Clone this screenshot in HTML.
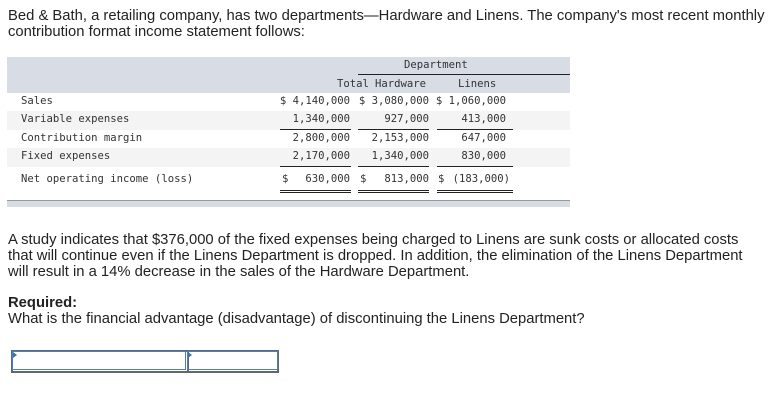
<!DOCTYPE html>
<html><head><style>
body{margin:0;width:768px;height:407px;background:#fff;position:relative;font-family:"Liberation Sans",Arial,sans-serif;color:#222;overflow:hidden}
.p{position:absolute;left:8px;font-size:14.8px;line-height:16px;white-space:nowrap}
.m{position:absolute;font-family:"DejaVu Sans Mono","Liberation Mono",monospace;font-size:10.6px;color:#333;white-space:nowrap}
.r{text-align:right}
.band{position:absolute;left:7px;width:563px}
.ln{position:absolute;height:1px;background:#222}
</style></head><body>
<div class="p" style="top:8px">Bed &amp; Bath, a retailing company, has two departments—Hardware and Linens. The company's most recent monthly<br>contribution format income statement follows:</div>

<div class="band" style="top:57px;height:36px;background:#d8dce4"></div>
<div class="band" style="top:111px;height:19px;background:#f4f4f4"></div>
<div class="band" style="top:148px;height:19px;background:#f4f4f4"></div>
<div class="band" style="top:200px;height:6px;background:#d8dce4;border-top:1px solid #999"></div>

<div class="m" style="left:404px;top:59px">Department</div>
<div class="ln" style="left:358px;width:212px;top:74px"></div>
<div class="m" style="left:337px;top:78px">Total</div>
<div class="m" style="left:375px;top:78px">Hardware</div>
<div class="m" style="left:458px;top:78px">Linens</div>

<div class="m" style="left:21px;top:95px">Sales</div>
<div class="m" style="left:21px;top:113px">Variable expenses</div>
<div class="m" style="left:21px;top:132px">Contribution margin</div>
<div class="m" style="left:21px;top:150px">Fixed expenses</div>
<div class="m" style="left:21px;top:173px">Net operating income (loss)</div>

<div class="m r" style="right:418px;top:95px">$ 4,140,000</div>
<div class="m r" style="right:339px;top:95px">$ 3,080,000</div>
<div class="m r" style="right:262px;top:95px">$ 1,060,000</div>
<div class="m r" style="right:418px;top:113px">1,340,000</div>
<div class="m r" style="right:339px;top:113px">927,000</div>
<div class="m r" style="right:262px;top:113px">413,000</div>
<div class="m r" style="right:418px;top:132px">2,800,000</div>
<div class="m r" style="right:339px;top:132px">2,153,000</div>
<div class="m r" style="right:262px;top:132px">647,000</div>
<div class="m r" style="right:418px;top:150px">2,170,000</div>
<div class="m r" style="right:339px;top:150px">1,340,000</div>
<div class="m r" style="right:262px;top:150px">830,000</div>
<div class="m" style="left:282px;top:173px">$</div>
<div class="m r" style="right:418px;top:173px">630,000</div>
<div class="m" style="left:360px;top:173px">$</div>
<div class="m r" style="right:339px;top:173px">813,000</div>
<div class="m" style="left:438px;top:173px">$</div>
<div class="m r" style="right:258px;top:173px">(183,000)</div>

<div class="ln" style="left:280px;width:71px;top:129px"></div>
<div class="ln" style="left:358px;width:71px;top:129px"></div>
<div class="ln" style="left:437px;width:76px;top:129px"></div>
<div class="ln" style="left:280px;width:71px;top:166px"></div>
<div class="ln" style="left:358px;width:71px;top:166px"></div>
<div class="ln" style="left:437px;width:76px;top:166px"></div>
<div class="ln" style="left:280px;width:71px;top:190px"></div>
<div class="ln" style="left:358px;width:71px;top:190px"></div>
<div class="ln" style="left:437px;width:76px;top:190px"></div>
<div class="ln" style="left:280px;width:71px;top:192px"></div>
<div class="ln" style="left:358px;width:71px;top:192px"></div>
<div class="ln" style="left:437px;width:76px;top:192px"></div>

<div class="p" style="top:232px">A study indicates that $376,000 of the fixed expenses being charged to Linens are sunk costs or allocated costs<br>that will continue even if the Linens Department is dropped. In addition, the elimination of the Linens Department<br>will result in a 14% decrease in the sales of the Hardware Department.</div>
<div class="p" style="top:295px"><b>Required:</b><br>What is the financial advantage (disadvantage) of discontinuing the Linens Department?</div>

<div style="position:absolute;left:11px;top:350px;width:174px;height:19px;border:2px solid #666;box-sizing:content-box"></div>
<div style="position:absolute;left:187px;top:350px;width:90px;height:19px;border:2px solid #666;border-left:0"></div>
<div style="position:absolute;left:12px;top:351px;width:172px;height:17px;border:1px solid #4a7fc0"></div>
<div style="position:absolute;left:187px;top:351px;width:89px;height:17px;border:1px solid #4a7fc0"></div>
<div style="position:absolute;left:13px;top:352px;width:0;height:0;border-top:3px solid transparent;border-bottom:3px solid transparent;border-left:4px solid #3a72c0"></div>
<div style="position:absolute;left:188px;top:352px;width:0;height:0;border-top:3px solid transparent;border-bottom:3px solid transparent;border-left:4px solid #3a72c0"></div>
</body></html>
